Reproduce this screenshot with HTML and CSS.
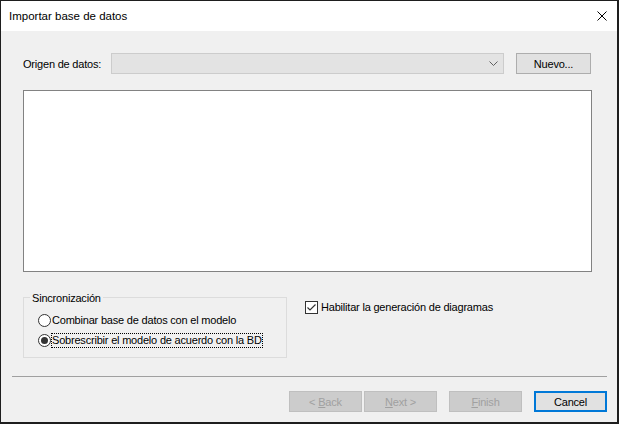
FILE: index.html
```html
<!DOCTYPE html>
<html lang="es">
<head>
<meta charset="utf-8">
<title>Importar base de datos</title>
<link rel="stylesheet" href="styles.css">
</head>
<body>
<div class="window">
  <div class="titlebar">
    <span class="title">Importar base de datos</span>
    <svg class="close" width="10" height="10" viewBox="0 0 10 10"><path d="M0.5 0.5 L9.5 9.5 M9.5 0.5 L0.5 9.5" stroke="#000" stroke-width="1" fill="none"/></svg>
  </div>
  <div class="main">
    <div class="source-row">
      <span class="label">Origen de datos:</span>
      <div class="combo">
        <svg class="chevron" width="9" height="5" viewBox="0 0 9 5"><path d="M0.5 0.5 L4.5 4.5 L8.5 0.5" stroke="#606060" stroke-width="1" fill="none"/></svg>
      </div>
      <button class="btn">Nuevo...</button>
    </div>
    <div class="listbox"></div>
    <div class="lower">
      <div class="group">
        <span class="legend">Sincronización</span>
        <label class="option">
          <span class="radio"></span>
          <span class="opt-text">Combinar base de datos con el modelo</span>
        </label>
        <label class="option">
          <span class="radio checked"></span>
          <span class="opt-text focus">Sobrescribir el modelo de acuerdo con la BD</span>
        </label>
      </div>
      <label class="check-row">
        <span class="checkbox"><svg width="11" height="11" viewBox="0 0 11 11"><path d="M1.5 5.5 L4 8 L9.5 2.5" stroke="#333" stroke-width="1.2" fill="none"/></svg></span>
        <span class="opt-text">Habilitar la generación de diagramas</span>
      </label>
    </div>
  </div>
  <div class="separator"></div>
  <div class="footer">
    <button class="btn disabled">&lt; <u>B</u>ack</button>
    <button class="btn disabled next"><u>N</u>ext &gt;</button>
    <button class="btn disabled wide-gap"><u>F</u>inish</button>
    <button class="btn default wide-gap">Cancel</button>
  </div>
</div>
</body>
</html>
```

FILE: styles.css
```css
html, body {
  margin: 0;
  padding: 0;
  background: #f0f0f0;
}
body {
  font-family: "Liberation Sans", Arial, sans-serif;
  font-size: 11px;
  letter-spacing: -0.2px;
  color: #000;
}
.window {
  width: 619px;
  height: 424px;
  box-sizing: border-box;
  border-left: 1px solid #1e1e1e;
  border-top: 1px solid #1e1e1e;
  border-right: 2px solid #1e1e1e;
  border-bottom: 2px solid #1e1e1e;
  background: #f0f0f0;
  display: flex;
  flex-direction: column;
}
.titlebar {
  height: 30px;
  background: #fff;
  display: flex;
  align-items: center;
  justify-content: space-between;
  padding: 0 10px 0 8px;
  flex: none;
}
.title {
  font-size: 11.5px;
  letter-spacing: 0;
  padding-bottom: 1px;
}
.close {
  display: block;
}
.main {
  padding: 22px 25px 0 22px;
}
.source-row {
  display: flex;
  align-items: center;
  height: 21px;
}
.label {
  width: 88px;
  flex: none;
}
.combo {
  width: 393px;
  height: 21px;
  box-sizing: border-box;
  border: 1px solid #cccccc;
  background: #e3e3e3;
  display: flex;
  align-items: center;
  justify-content: flex-end;
  padding-right: 5px;
  flex: none;
}
.chevron {
  display: block;
}
.btn {
  font: inherit;
  letter-spacing: inherit;
  width: 75px;
  height: 21px;
  box-sizing: border-box;
  border: 1px solid #adadad;
  background: #e1e1e1;
  color: #000;
  padding: 0;
  margin: 0 0 0 12px;
  flex: none;
}
.listbox {
  margin-top: 16px;
  height: 182px;
  box-sizing: border-box;
  border: 1px solid #828282;
  background: #fff;
}
.lower {
  display: flex;
  align-items: flex-start;
  margin-top: 25px;
}
.group {
  width: 264px;
  height: 61px;
  box-sizing: border-box;
  border: 1px solid #dcdcdc;
  display: flex;
  flex-direction: column;
  align-items: flex-start;
  flex: none;
}
.legend {
  margin: -7px 0 0 6px;
  padding: 0 2px;
  line-height: 14px;
  background: #f0f0f0;
}
.option {
  display: flex;
  align-items: center;
  height: 20px;
  padding-left: 14px;
}
.option:first-of-type {
  margin-top: 5px;
}
.radio {
  width: 13px;
  height: 13px;
  box-sizing: border-box;
  border: 1px solid #333;
  border-radius: 50%;
  background: #fff;
  display: flex;
  align-items: center;
  justify-content: center;
  margin-right: 1px;
  flex: none;
}
.radio.checked::after {
  content: "";
  width: 7px;
  height: 7px;
  border-radius: 50%;
  background: #333;
}
.opt-text {
  line-height: 13px;
}
.focus {
  outline: 1px dotted #000;
  outline-offset: 0;
}
.check-row {
  display: flex;
  align-items: center;
  margin: 4px 0 0 18px;
}
.checkbox {
  width: 13px;
  height: 13px;
  box-sizing: border-box;
  border: 1px solid #333;
  background: #fff;
  display: flex;
  align-items: center;
  justify-content: center;
  margin-right: 3px;
  flex: none;
}
.checkbox svg {
  display: block;
}
.separator {
  margin: 18px 10px 0 11px;
  height: 1px;
  background: #a0a0a0;
}
.footer {
  display: flex;
  justify-content: flex-end;
  padding: 14px 10px 0 0;
}
.footer .btn {
  width: 73px;
  margin-left: 0;
}
.footer .btn.next {
  margin-left: 2px;
}
.footer .btn.wide-gap {
  margin-left: 12px;
}
.btn.disabled {
  background: #cccccc;
  border-color: #bfbfbf;
  color: #a0a0a0;
}
.btn.default {
  border: 2px solid #0078d7;
}
```
